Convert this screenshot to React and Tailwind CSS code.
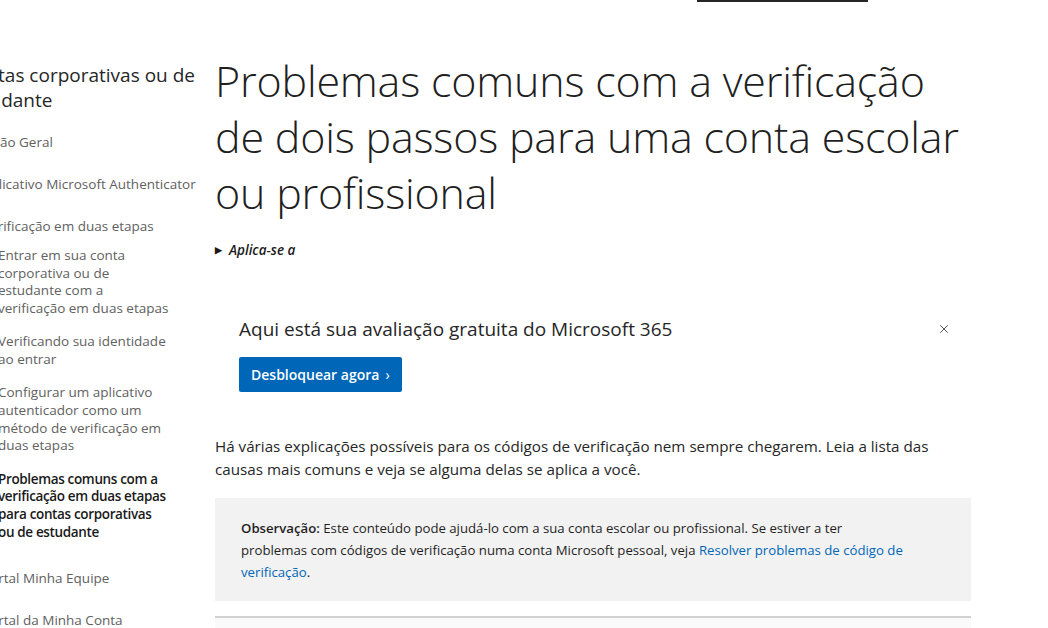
import { X } from "lucide-react";

const font = { fontFamily: '"Open Sans", "Noto Sans", sans-serif' };

const topItems = ["Visão Geral", "Aplicativo Microsoft Authenticator", "Verificação em duas etapas"];

// line breaks follow the narrow sidebar column
const nestedItems = [
  { lines: ["Entrar em sua conta", "corporativa ou de", "estudante com a", "verificação em duas etapas"] },
  { lines: ["Verificando sua identidade", "ao entrar"] },
  { lines: ["Configurar um aplicativo", "autenticador como um", "método de verificação em", "duas etapas"] },
  {
    lines: ["Problemas comuns com a", "verificação em duas etapas", "para contas corporativas", "ou de estudante"],
    active: true,
  },
];

function Sidebar() {
  return (
    <aside className="w-[215px] shrink-0 overflow-hidden">
      <div className="-ml-[37px] w-[240px] pt-[61px]">
        <h2 className="text-[19px] leading-[25px] text-[#262626]">
          Contas corporativas ou de estudante
        </h2>
        <ul className="mt-[8px] ml-[19px] text-[13.5px] text-[#616161]">
          {topItems.map((t) => (
            <li key={t} className="h-[42px] flex items-center whitespace-nowrap">
              {t}
            </li>
          ))}
          <li>
            <ul className="ml-[16px] w-[190px] flex flex-col gap-[15.5px] pb-[16px]">
              {nestedItems.map((n) => (
                <li
                  key={n.lines[0]}
                  className={
                    n.active
                      ? "leading-[17.7px] font-semibold tracking-[-0.35px] text-[#1a1a1a]"
                      : "leading-[17.7px]"
                  }
                >
                  {n.lines.map((l) => (
                    <span key={l} className="block whitespace-nowrap">
                      {l}
                    </span>
                  ))}
                </li>
              ))}
            </ul>
          </li>
          <li className="h-[42px] flex items-center">Portal Minha Equipe</li>
          <li className="h-[42px] flex items-center">Portal da Minha Conta</li>
        </ul>
      </div>
    </aside>
  );
}

export default function App() {
  return (
    <div className="w-[1048px] h-[628px] overflow-hidden bg-white relative" style={font}>
      <div className="h-[2px] flex">
        <div className="ml-[697px] w-[171px] h-[2px] bg-[#262626]" />
      </div>
      <div className="flex">
        <Sidebar />
        <main className="w-[756px] pt-[51px]">
          <h1 className="text-[43px] leading-[56px] font-light text-[#1f1f1f] tracking-[-0.2px]">
            Problemas comuns com a verificação de dois passos para uma conta escolar ou profissional
          </h1>
          <div className="mt-[19px] flex items-center gap-[7px] text-[13.5px] italic font-semibold text-[#1a1a1a]">
            <span className="text-[9px] not-italic">▶</span>
            <span>Aplica-se a</span>
          </div>

          <section className="mt-[56px] px-[24px] relative">
            <p className="text-[19px] leading-[26px] text-[#262626]">
              Aqui está sua avaliação gratuita do Microsoft 365
            </p>
            <button className="absolute right-[20px] top-[6px] text-[#333]">
              <X size={14} strokeWidth={1.4} />
            </button>
            <button className="mt-[15px] h-[35px] px-[12px] bg-[#0067b8] rounded-[2px] text-white text-[14px] font-semibold flex items-center gap-[6px]">
              Desbloquear agora
              <span className="font-normal">›</span>
            </button>
          </section>

          <p className="mt-[43px] w-[740px] text-[15.2px] leading-[23px] text-[#262626]">
            Há várias explicações possíveis para os códigos de verificação nem sempre chegarem. Leia a lista das causas mais comuns e veja se alguma delas se aplica a você.
          </p>

          <div className="mt-[17px] bg-[#f2f2f2] pl-[26px] pr-[24px] pt-[19px] pb-[18px]">
            <p className="text-[13.2px] leading-[22px] text-[#1f1f1f]">
              <b className="font-semibold">Observação:</b> Este conteúdo pode ajudá-lo com a sua conta escolar ou profissional. Se estiver a ter
              <br />
              problemas com códigos de verificação numa conta Microsoft pessoal, veja{" "}
              <a className="text-[#0067b8]">
                Resolver problemas de código de
                <br />
                verificação
              </a>
              .
            </p>
          </div>

          <div className="mt-[15px] h-[40px] border-t-2 border-[#d2d2d2] bg-[#fafafa]" />
        </main>
      </div>
    </div>
  );
}
